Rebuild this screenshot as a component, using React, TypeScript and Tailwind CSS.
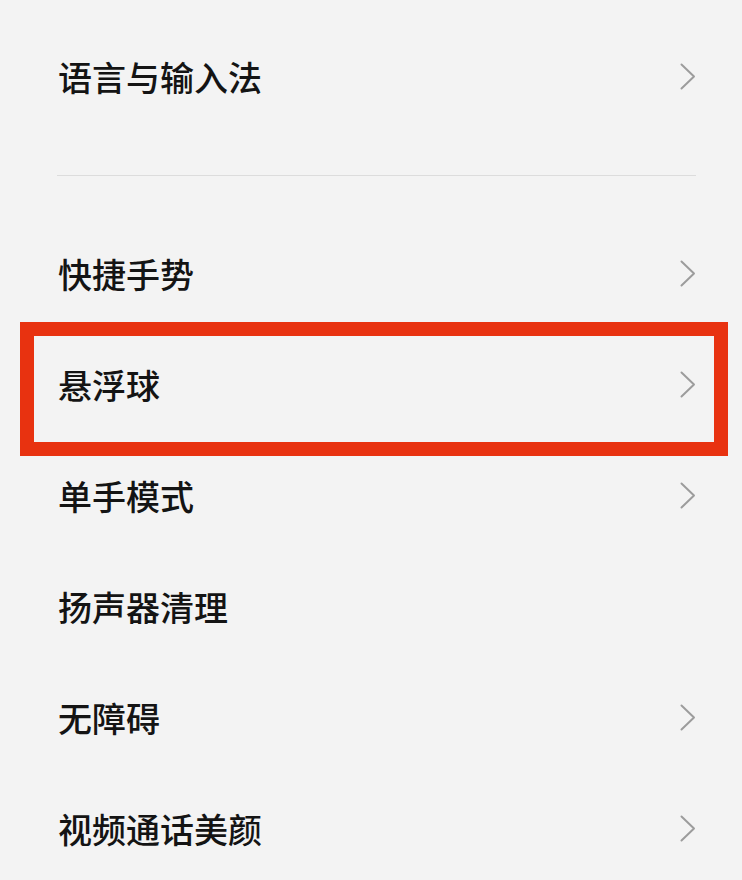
type Item = { label: string; arrow?: boolean; hl?: boolean }

const items: Item[] = [
  { label: '快捷手势', arrow: true },
  { label: '悬浮球', arrow: true, hl: true },
  { label: '单手模式', arrow: true },
  { label: '扬声器清理', arrow: false },
  { label: '无障碍', arrow: true },
  { label: '视频通话美颜', arrow: true },
]

function Chevron() {
  return (
    <svg width="16" height="27" viewBox="0 0 16 27" fill="none" className="shrink-0">
      <path d="M1.5 1.5 14 13.5 1.5 25.5" stroke="#9c9c9c" strokeWidth="2" strokeLinecap="round" strokeLinejoin="round" />
    </svg>
  )
}

function Row({ label, arrow, hl }: Item) {
  return (
    <div className="relative flex h-[111px] items-center justify-between pl-[58px] pr-[46px]">
      <span className="text-[34px] font-medium leading-none text-[#141414]">{label}</span>
      {arrow && <Chevron />}
      {hl && <div className="pointer-events-none absolute left-[20px] right-[14px] top-[-7px] bottom-[-16px] border-[14px] border-[#e83210]" />}
    </div>
  )
}

export default function App() {
  return (
    <div className="h-[880px] w-[742px] overflow-hidden bg-[#f3f3f3] pt-[21px]" style={{ fontFamily: '"Noto Sans CJK SC", "Noto Sans", sans-serif' }}>
      <Row label="语言与输入法" arrow />
      <div className="flex h-[86px] items-center pl-[57px] pr-[46px]">
        <div className="h-px w-full bg-[#dcdcdc]" />
      </div>
      {items.map((it) => (
        <Row key={it.label} {...it} />
      ))}
    </div>
  )
}
